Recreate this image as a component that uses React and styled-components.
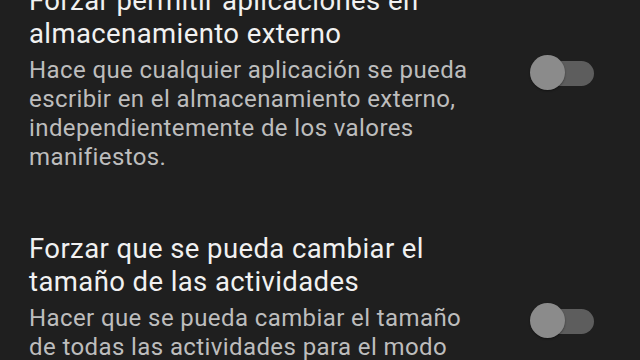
import React from "react";
import styled, { createGlobalStyle } from "styled-components";

const Global = createGlobalStyle`
  html, body { margin: 0; padding: 0; background: #1f1f1f; }
  body { font-family: Roboto, "Noto Sans", sans-serif; overflow: hidden; }
`;

const Screen = styled.div`
  width: 640px;
  height: 360px;
  overflow: hidden;
  background: #1f1f1f;
`;

const List = styled.div`
  display: flex;
  flex-direction: column;
  margin-top: -46px;
`;

const Row = styled.div`
  display: flex;
  align-items: center;
  padding: 30px 46px 30px 29px;
  gap: 50px;
`;

const Texts = styled.div`
  flex: 1;
  display: flex;
  flex-direction: column;
  gap: 6px;
`;

const Title = styled.div`
  color: #f1f1f1;
  font-size: 27.5px;
  letter-spacing: 0.4px;
  line-height: 33px;
`;

const Desc = styled.div`
  color: #bdbdbd;
  font-size: 24px;
  letter-spacing: 0.4px;
  line-height: 29px;
`;

const Switch = styled.div`
  position: relative;
  width: 64px;
  height: 36px;
  flex: none;
  margin-top: ${(p) => p.$shift}px;
`;

const Track = styled.div`
  position: absolute;
  left: 14px;
  top: 6px;
  width: 50px;
  height: 25px;
  border-radius: 13px;
  background: #5d5d5d;
`;

const Thumb = styled.div`
  position: absolute;
  left: 0;
  top: 0;
  width: 35px;
  height: 35px;
  border-radius: 50%;
  background: #8b8b8b;
  box-shadow: 0 1px 2px rgba(0, 0, 0, 0.4);
`;

const items = [
  {
    title: "Forzar permitir aplicaciones en almacenamiento externo",
    desc: "Hace que cualquier aplicación se pueda escribir en el almacenamiento externo, independientemente de los valores manifiestos.",
  },
  {
    title: "Forzar que se pueda cambiar el tamaño de las actividades",
    desc: "Hacer que se pueda cambiar el tamaño de todas las actividades para el modo multiventana, independientemente de los valores manifiestos.",
  },
];

export default function App() {
  return (
    <Screen>
      <Global />
      <List>
        {items.map((it) => (
          <Row key={it.title}>
            <Texts>
              <Title>{it.title}</Title>
              <Desc>{it.desc}</Desc>
            </Texts>
            <Switch $shift={-10}>
              <Track />
              <Thumb />
            </Switch>
          </Row>
        ))}
      </List>
    </Screen>
  );
}
